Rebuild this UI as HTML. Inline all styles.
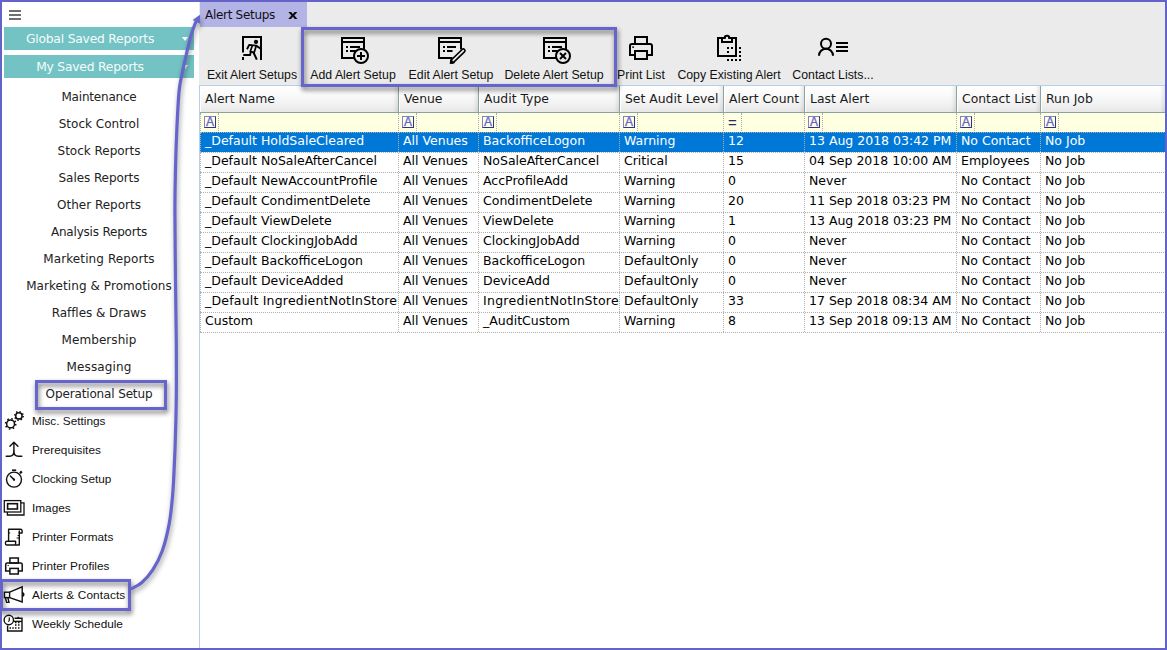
<!DOCTYPE html><html><head><meta charset="utf-8"><title>Alert Setups</title><style>*{box-sizing:border-box;margin:0;padding:0}
html,body{width:1167px;height:650px;overflow:hidden;background:#fff}
body{font-family:"DejaVu Sans","Liberation Sans",sans-serif;color:#1a1a1a}
#app{position:absolute;left:0;top:0;width:1167px;height:650px;background:#fff;overflow:hidden}
#frame{left:0;top:0;width:1167px;height:650px;border:2px solid #6464c8;pointer-events:none}
#app>*{position:absolute}
#side{left:0;top:0;width:200px;height:650px;background:#fff}
#side>*{position:absolute}
.burger{left:9px;top:10px;width:12px;height:10px}
.burger i{display:block;height:2px;background:#6e6e6e;margin-bottom:2px}
.teal{left:4px;width:190px;height:23px;background:#73c3c4;color:#f6fcfc;font-size:12.3px;letter-spacing:-0.2px;line-height:23px;text-align:center;padding:1px 18px 0 0}
.teal b{position:absolute;left:177.6px;top:10px;border:3.7px solid transparent;border-top:4.5px solid #fff;border-bottom:0}
.st{left:0;width:198px;height:20px;line-height:20px;text-align:center;font-size:12px;color:#222}
.sb{left:0;width:198px;height:22px;line-height:22px;font-family:"Liberation Sans",sans-serif;font-size:11.8px;color:#111}
.si{position:absolute;overflow:visible}
.sb span{position:absolute;left:32px;top:0;white-space:nowrap}
#main{left:200px;top:0;width:967px;height:650px;background:#ebebeb;box-shadow:-1px 0 0 #ebebeb}
#main>*{position:absolute}
.tab{left:0;top:2px;width:107px;height:25px;background:#b3b3e5;font-size:12px;letter-spacing:-0.3px;line-height:25px;color:#101018}
.tab span{position:absolute;left:5px;top:1px}
.tab .cx{position:absolute;left:88px;top:0;font-size:12.8px;font-weight:bold;letter-spacing:0;color:#0a0a0a;transform:scaleX(1.18);transform-origin:left center;line-height:25px}
.tb{top:32px;width:140px;height:52px;text-align:center;font-family:"Liberation Sans",sans-serif;font-size:12.3px;color:#111}
.ti{position:absolute;overflow:visible}
.tb span{position:absolute;left:0;width:140px;top:36px;white-space:nowrap}
#grid{left:-1px;top:85px;width:968px;height:565px;background:#fff;border-left:1px solid #b5cfe8;border-top:1px solid #b5cfe8}
#grid>*{position:absolute}
.hdr{left:0;top:0;width:968px;height:27px;background:linear-gradient(#fff,#fbfbfb 30%,#f3f3f3 65%,#e7e7e7);border-bottom:1px solid #8aa3a3}
.hc{position:absolute;top:0;height:26px;line-height:25px;font-size:12.4px;padding-left:5px;border-left:1px solid #8aa3a3;box-shadow:inset 1px 0 0 #fff;white-space:nowrap;overflow:hidden;background:linear-gradient(to right,rgba(0,0,0,0) calc(100% - 5px),rgba(0,0,0,.09))}
.hc:first-child{border-left:0;padding-left:5px}
.flt{left:0;top:27px;width:968px;height:19px;background:#ffffe1}
.fc{position:absolute;top:0;height:20px}
.fc em{position:absolute;left:3px;top:3px;font-style:normal}
.fc em.fa{width:12px;height:12px;border:1px solid #8080d4;border-right-color:#33338a;border-bottom-color:#33338a;color:#6262cc;font-size:12px;line-height:11px;text-align:center;font-family:"Liberation Sans",sans-serif;-webkit-text-stroke:.3px #6262cc}
.fc em.eq{font-size:15px;line-height:12px;left:4px;top:4px;color:#2a2a60;font-family:"Liberation Sans",sans-serif}
.fc u{position:absolute;left:17px;top:0;height:20px;border-left:1px dotted #aaa}
.fc{border-left:1px dotted #aaa}
.row{left:0;width:968px;height:20px;border-top:1px dotted #b0b0b0;font-size:12.5px;line-height:16px;background:#fff;color:#000}
.row.sel{background:#0078d7;color:#fff}
.c{position:absolute;top:0;height:19px;padding-left:4px;border-left:1px dotted #b0b0b0;white-space:nowrap;overflow:hidden}
.c:first-child{padding-left:4px}
.pb{border:3px solid #6565cb;filter:drop-shadow(1.5px 3px 2.5px rgba(0,0,0,.58))}
.arrow{left:0;top:0;filter:drop-shadow(1px 3px 2.5px rgba(0,0,0,.4));overflow:hidden}
.row.last{height:21px;border-bottom:1px dotted #b0b0b0}
</style></head><body>
<div id="app">
<div id="side">
<div class="burger"><i></i><i></i><i></i></div>
<div class="teal" style="top:27px">Global Saved Reports<b></b></div>
<div class="teal" style="top:55px">My Saved Reports<b></b></div>
<div class="st" style="top:87px;letter-spacing:-0.2px">Maintenance</div>
<div class="st" style="top:114px;letter-spacing:0.02px">Stock Control</div>
<div class="st" style="top:141px;letter-spacing:-0.01px">Stock Reports</div>
<div class="st" style="top:168px;letter-spacing:-0.07px">Sales Reports</div>
<div class="st" style="top:195px;letter-spacing:-0.01px">Other Reports</div>
<div class="st" style="top:222px;letter-spacing:-0.2px">Analysis Reports</div>
<div class="st" style="top:249px;letter-spacing:0.1px">Marketing Reports</div>
<div class="st" style="top:276px;letter-spacing:0.07px">Marketing &amp; Promotions</div>
<div class="st" style="top:303px;letter-spacing:-0.06px">Raffles &amp; Draws</div>
<div class="st" style="top:330px;letter-spacing:0.08px">Membership</div>
<div class="st" style="top:357px;letter-spacing:0.14px">Messaging</div>
<div class="st" style="top:384px;letter-spacing:-0.14px">Operational Setup</div>
<svg class="si" style="left:0;top:408px" width="30" height="26" viewBox="0 408 30 26" fill="none" stroke="#111" stroke-width="1.5"><circle cx="10.6" cy="423.9" r="3.9"/><circle cx="10.6" cy="423.9" r="5.1" stroke-width="1.6" stroke-dasharray="1.6 2.4"/><circle cx="18.9" cy="415.9" r="3.2"/><circle cx="18.9" cy="415.9" r="4.3" stroke-width="1.5" stroke-dasharray="1.4 1.98"/></svg>
<div class="sb" style="top:410px"><span>Misc. Settings</span></div>
<svg class="si" style="left:0;top:438px" width="30" height="24" viewBox="0 438 30 24" fill="none" stroke="#111" stroke-width="1.4" stroke-linecap="round" stroke-linejoin="round"><path d="M13.9 442.4V451M9.9 446.3L13.9 442.3L17.9 446.3"/><path d="M6.2 456.2H9.5C12.5 456.2 13.9 454 13.9 451C13.9 454 15.3 456.2 18.3 456.2H21.8"/></svg>
<div class="sb" style="top:439px"><span>Prerequisites</span></div>
<svg class="si" style="left:0;top:466px" width="30" height="26" viewBox="0 466 30 26" fill="none" stroke="#111" stroke-width="1.4"><circle cx="14" cy="479.6" r="7.5"/><path d="M12 470.2H16.2" stroke-width="1.6"/><path d="M20 473.2L21.8 471.4" stroke-width="2.2"/><path d="M14 479.6L10.4 476" stroke-width="1.5" stroke-linecap="round"/><circle cx="14" cy="479.7" r="1.1" fill="#111" stroke="none"/></svg>
<div class="sb" style="top:468px"><span>Clocking Setup</span></div>
<svg class="si" style="left:0;top:496px" width="30" height="24" viewBox="0 496 30 24" fill="none" stroke="#111" stroke-width="1.3"><rect x="4.3" y="500.6" width="16.5" height="11.4"/><rect x="7.6" y="503.7" width="9.8" height="5.3" stroke-width="1.6"/><path d="M20.8 502.8H24V515H7.4V512"/></svg>
<div class="sb" style="top:497px"><span>Images</span></div>
<svg class="si" style="left:0;top:524px" width="30" height="26" viewBox="0 524 30 26" fill="none" stroke="#111" stroke-width="1.4" stroke-linejoin="round"><path d="M8.6 541.2V529.2H20.5a1.6 1.9 0 0 1 1.6 1.9V533H19.3V530.6"/><path d="M19.3 532V545H6.6a1.2 1.9 0 0 1 0-3.8H15.6V545"/><path d="M8.6 533h1.6M17.6 535.5h1.6M16.6 538h2.6" stroke-width="1"/></svg>
<div class="sb" style="top:526px"><span>Printer Formats</span></div>
<svg class="si" style="left:0;top:553px" width="30" height="26" viewBox="0 553 30 26" fill="none" stroke="#111" stroke-width="1.5"><rect x="9.9" y="558" width="8.4" height="5"/><path d="M9.9 571H5.7V564.6a1.6 1.6 0 0 1 1.6-1.6H20.6a1.6 1.6 0 0 1 1.6 1.6V571H18.3"/><rect x="9.9" y="568.4" width="8.4" height="5.6"/><rect x="7.6" y="565" width="1.2" height="1" fill="#111" stroke="none"/></svg>
<div class="sb" style="top:555px"><span>Printer Profiles</span></div>
<svg class="si" style="left:0;top:582px" width="30" height="26" viewBox="0 582 30 26" fill="none" stroke="#111" stroke-width="1.4" stroke-linejoin="miter"><rect x="4.4" y="592.2" width="5.2" height="5.4"/><path d="M9.6 592.2L22.2 586.8V602L9.6 597.6"/><path d="M22.3 592.6a1.6 1.8 0 0 1 0 3.6" fill="#111"/><path d="M5.4 597.8L6.6 602.4H9L7.9 597.8"/></svg>
<div class="sb" style="top:584px"><span style="letter-spacing:.13px">Alerts &amp; Contacts</span></div>
<svg class="si" style="left:0;top:611px" width="30" height="26" viewBox="0 611 30 26" fill="none" stroke="#111" stroke-width="1.4"><path d="M14.5 618.3H22V631H7.6V625.4"/><path d="M14 621.4H22"/><path d="M18.3 616.8V619" stroke-width="1.6"/><circle cx="8.8" cy="620" r="4.7"/><path d="M9.3 617.4V620.6L8.2 621.6" stroke-width="1.2"/><path d="M15 625h1.5M18 625h1.5M9.5 628h1.5M12.3 628h1.5M15 628h1.5M18 628h1.5M15 622.6h1.5M18 622.6h1.5" stroke-width="1.3"/></svg>
<div class="sb" style="top:613px"><span>Weekly Schedule</span></div>
</div>
<div id="main">
<div class="tab"><span>Alert Setups</span><b class="cx">x</b></div>
<svg class="ti" style="left:42px;top:36px" width="22" height="26" viewBox="0 0 22 26" fill="none" stroke="#000" stroke-width="2"><path d="M1 16.6V1H19V24"/><rect x="0" y="21" width="2" height="3" fill="#000" stroke="none"/><circle cx="14" cy="5.9" r="2.1" fill="#000" stroke="none"/><path d="M5 13.2L7.2 8.9L14.2 9.6L18.8 12.8" stroke-width="1.9" stroke-linejoin="round"/><path d="M10.4 9.2L8.3 15.4L12.1 16.6L14.2 10" stroke-width="1.7"/><path d="M9 15.6L8 19H1.3" stroke-width="1.9"/><path d="M11.3 16L14.8 23.6" stroke-width="2"/></svg>
<div class="tb" style="left:-18px"><span>Exit Alert Setups</span></div>
<svg class="ti" style="left:141px;top:37px" width="30" height="28" viewBox="0 0 30 28" fill="none" stroke="#000" stroke-width="2"><rect x="1" y="1" width="22" height="20"/><path d="M1 5H23"/><path d="M5 10h2M9 10h10M5 14h2M9 14h6"/><circle cx="20" cy="19" r="7" fill="#ebebeb"/><path d="M16 19h8M20 15v8"/></svg>
<div class="tb" style="left:83px"><span>Add Alert Setup</span></div>
<svg class="ti" style="left:238px;top:37px" width="30" height="28" viewBox="0 0 30 28" fill="none" stroke="#000" stroke-width="2"><path d="M23 12.5V1H1V21H14.5"/><path d="M1 5H23"/><path d="M5 10h2M9 10h9M5 14h2M9 14h5.5"/><path d="M25.3 13.7L14.6 24" stroke-width="5" stroke-linecap="round"/><path d="M12.2 26.6L12.9 22.3L16.4 25.7Z" fill="#000" stroke-width="1"/><path d="M25.3 13.7L15.2 23.4" stroke="#ebebeb" stroke-width="1.7" stroke-linecap="round"/></svg>
<div class="tb" style="left:181px"><span>Edit Alert Setup</span></div>
<svg class="ti" style="left:343px;top:37px" width="30" height="28" viewBox="0 0 30 28" fill="none" stroke="#000" stroke-width="2"><rect x="1" y="1" width="22" height="20"/><path d="M1 5H23"/><path d="M5 10h2M9 10h10M5 14h2M9 14h6"/><circle cx="20" cy="19" r="7" fill="#ebebeb"/><path d="M17 16l6 6M23 16l-6 6"/></svg>
<div class="tb" style="left:284px"><span>Delete Alert Setup</span></div>
<svg class="ti" style="left:429px;top:35px" width="24" height="26" viewBox="0 0 24 26" fill="none" stroke="#000" stroke-width="2"><rect x="6" y="2" width="12" height="7"/><path d="M6 20H1V11a2 2 0 0 1 2-2H21a2 2 0 0 1 2 2V20H18"/><rect x="6" y="16" width="12" height="8"/><rect x="3.3" y="11.3" width="1.6" height="1.6" fill="#000" stroke="none"/></svg>
<div class="tb" style="left:371px"><span>Print List</span></div>
<svg class="ti" style="left:517px;top:33px" width="26" height="30" viewBox="0 0 26 30" fill="#000" stroke="none"><path d="M8.7 5H1V23H19V5H11.3" fill="none" stroke="#000" stroke-width="2"/><path d="M5 5V9H15V5" fill="none" stroke="#000" stroke-width="2"/><path d="M7.7 5.6V5a2.3 2.3 0 0 1 4.6 0V5.6" fill="none" stroke="#000" stroke-width="2"/><rect x="10" y="14" width="2" height="2"/><rect x="14" y="14" width="2" height="2"/><rect x="10" y="18" width="2" height="2"/><rect x="22" y="14" width="2" height="2"/><rect x="22" y="18" width="2" height="2"/><rect x="22" y="22" width="2" height="2"/><rect x="22" y="26" width="2" height="2"/><rect x="10" y="26" width="2" height="2"/><rect x="14" y="26" width="2" height="2"/><rect x="18" y="26" width="2" height="2"/></svg>
<div class="tb" style="left:459px"><span>Copy Existing Alert</span></div>
<svg class="ti" style="left:617px;top:36px" width="34" height="22" viewBox="0 0 34 22" fill="none" stroke="#000" stroke-width="2"><circle cx="9" cy="7.7" r="5"/><path d="M2 19.7a7 7 0 0 1 14 0"/><path d="M19 7h12M19 11h12M19 15h12"/></svg>
<div class="tb" style="left:563px"><span>Contact Lists...</span></div>
<div id="grid">
<div class="hdr">
<div class="hc" style="left:0px;width:198px">Alert Name</div>
<div class="hc" style="left:198px;width:80px">Venue</div>
<div class="hc" style="left:278px;width:141px">Audit Type</div>
<div class="hc" style="left:419px;width:104px">Set Audit Level</div>
<div class="hc" style="left:523px;width:81px">Alert Count</div>
<div class="hc" style="left:604px;width:152px">Last Alert</div>
<div class="hc" style="left:756px;width:84px">Contact List</div>
<div class="hc" style="left:840px;width:125px">Run Job</div>
</div>
<div class="flt">
<div class="fc" style="left:0px;width:198px"><em class="fa">A</em><u></u></div>
<div class="fc" style="left:198px;width:80px"><em class="fa">A</em><u></u></div>
<div class="fc" style="left:278px;width:141px"><em class="fa">A</em><u></u></div>
<div class="fc" style="left:419px;width:104px"><em class="fa">A</em><u></u></div>
<div class="fc" style="left:523px;width:81px"><em class="eq">=</em><u></u></div>
<div class="fc" style="left:604px;width:152px"><em class="fa">A</em><u></u></div>
<div class="fc" style="left:756px;width:84px"><em class="fa">A</em><u></u></div>
<div class="fc" style="left:840px;width:125px"><em class="fa">A</em><u></u></div>
</div>
<div class="row sel" style="top:46px">
<div class="c" style="left:0px;width:198px">_Default HoldSaleCleared</div>
<div class="c" style="left:198px;width:80px">All Venues</div>
<div class="c" style="left:278px;width:141px">BackofficeLogon</div>
<div class="c" style="left:419px;width:104px">Warning</div>
<div class="c" style="left:523px;width:81px">12</div>
<div class="c" style="left:604px;width:152px">13 Aug 2018 03:42 PM</div>
<div class="c" style="left:756px;width:84px">No Contact</div>
<div class="c" style="left:840px;width:125px">No Job</div>
</div>
<div class="row" style="top:66px">
<div class="c" style="left:0px;width:198px">_Default NoSaleAfterCancel</div>
<div class="c" style="left:198px;width:80px">All Venues</div>
<div class="c" style="left:278px;width:141px">NoSaleAfterCancel</div>
<div class="c" style="left:419px;width:104px">Critical</div>
<div class="c" style="left:523px;width:81px">15</div>
<div class="c" style="left:604px;width:152px">04 Sep 2018 10:00 AM</div>
<div class="c" style="left:756px;width:84px">Employees</div>
<div class="c" style="left:840px;width:125px">No Job</div>
</div>
<div class="row" style="top:86px">
<div class="c" style="left:0px;width:198px">_Default NewAccountProfile</div>
<div class="c" style="left:198px;width:80px">All Venues</div>
<div class="c" style="left:278px;width:141px">AccProfileAdd</div>
<div class="c" style="left:419px;width:104px">Warning</div>
<div class="c" style="left:523px;width:81px">0</div>
<div class="c" style="left:604px;width:152px">Never</div>
<div class="c" style="left:756px;width:84px">No Contact</div>
<div class="c" style="left:840px;width:125px">No Job</div>
</div>
<div class="row" style="top:106px">
<div class="c" style="left:0px;width:198px">_Default CondimentDelete</div>
<div class="c" style="left:198px;width:80px">All Venues</div>
<div class="c" style="left:278px;width:141px">CondimentDelete</div>
<div class="c" style="left:419px;width:104px">Warning</div>
<div class="c" style="left:523px;width:81px">20</div>
<div class="c" style="left:604px;width:152px">11 Sep 2018 03:23 PM</div>
<div class="c" style="left:756px;width:84px">No Contact</div>
<div class="c" style="left:840px;width:125px">No Job</div>
</div>
<div class="row" style="top:126px">
<div class="c" style="left:0px;width:198px">_Default ViewDelete</div>
<div class="c" style="left:198px;width:80px">All Venues</div>
<div class="c" style="left:278px;width:141px">ViewDelete</div>
<div class="c" style="left:419px;width:104px">Warning</div>
<div class="c" style="left:523px;width:81px">1</div>
<div class="c" style="left:604px;width:152px">13 Aug 2018 03:23 PM</div>
<div class="c" style="left:756px;width:84px">No Contact</div>
<div class="c" style="left:840px;width:125px">No Job</div>
</div>
<div class="row" style="top:146px">
<div class="c" style="left:0px;width:198px">_Default ClockingJobAdd</div>
<div class="c" style="left:198px;width:80px">All Venues</div>
<div class="c" style="left:278px;width:141px">ClockingJobAdd</div>
<div class="c" style="left:419px;width:104px">Warning</div>
<div class="c" style="left:523px;width:81px">0</div>
<div class="c" style="left:604px;width:152px">Never</div>
<div class="c" style="left:756px;width:84px">No Contact</div>
<div class="c" style="left:840px;width:125px">No Job</div>
</div>
<div class="row" style="top:166px">
<div class="c" style="left:0px;width:198px">_Default BackofficeLogon</div>
<div class="c" style="left:198px;width:80px">All Venues</div>
<div class="c" style="left:278px;width:141px">BackofficeLogon</div>
<div class="c" style="left:419px;width:104px">DefaultOnly</div>
<div class="c" style="left:523px;width:81px">0</div>
<div class="c" style="left:604px;width:152px">Never</div>
<div class="c" style="left:756px;width:84px">No Contact</div>
<div class="c" style="left:840px;width:125px">No Job</div>
</div>
<div class="row" style="top:186px">
<div class="c" style="left:0px;width:198px">_Default DeviceAdded</div>
<div class="c" style="left:198px;width:80px">All Venues</div>
<div class="c" style="left:278px;width:141px">DeviceAdd</div>
<div class="c" style="left:419px;width:104px">DefaultOnly</div>
<div class="c" style="left:523px;width:81px">0</div>
<div class="c" style="left:604px;width:152px">Never</div>
<div class="c" style="left:756px;width:84px">No Contact</div>
<div class="c" style="left:840px;width:125px">No Job</div>
</div>
<div class="row" style="top:206px">
<div class="c" style="left:0px;width:198px;letter-spacing:.2px">_Default IngredientNotInStore</div>
<div class="c" style="left:198px;width:80px">All Venues</div>
<div class="c" style="left:278px;width:141px;letter-spacing:.27px">IngredientNotInStore</div>
<div class="c" style="left:419px;width:104px">DefaultOnly</div>
<div class="c" style="left:523px;width:81px">33</div>
<div class="c" style="left:604px;width:152px">17 Sep 2018 08:34 AM</div>
<div class="c" style="left:756px;width:84px">No Contact</div>
<div class="c" style="left:840px;width:125px">No Job</div>
</div>
<div class="row last" style="top:226px">
<div class="c" style="left:0px;width:198px">Custom</div>
<div class="c" style="left:198px;width:80px">All Venues</div>
<div class="c" style="left:278px;width:141px">_AuditCustom</div>
<div class="c" style="left:419px;width:104px">Warning</div>
<div class="c" style="left:523px;width:81px">8</div>
<div class="c" style="left:604px;width:152px">13 Sep 2018 09:13 AM</div>
<div class="c" style="left:756px;width:84px">No Contact</div>
<div class="c" style="left:840px;width:125px">No Job</div>
</div>
</div>
</div>
<div class="pb" style="left:301px;top:27px;width:316px;height:60px"></div>
<div class="pb" style="left:35px;top:380px;width:132px;height:30px"></div>
<div class="pb" style="left:0;top:579px;width:131px;height:32px"></div>
<svg class="arrow" width="200" height="650" viewBox="0 0 200 650"><path d="M131.9 588.4C133.5 587.5 138.2 585.7 141.6 582.7C145.0 579.7 149.1 575.5 152.6 570.2C156.1 564.9 159.5 558.6 162.3 550.8C165.1 542.9 167.6 532.3 169.3 523.1C171.0 513.9 171.8 504.6 172.6 495.4C173.4 486.2 173.8 476.9 174.2 467.7C174.6 458.5 175.0 451.6 175.3 440.0C175.7 428.4 176.1 414.2 176.3 398.0C176.5 381.8 176.4 362.7 176.3 343.0C176.2 323.3 175.7 302.0 175.5 280.0C175.3 258.0 174.9 229.5 174.9 211.0C174.9 192.5 175.2 182.8 175.5 169.0C175.8 155.2 176.3 140.8 176.9 128.0C177.5 115.2 178.2 101.0 179.0 92.0C179.8 83.0 180.8 80.2 182.0 74.0C183.2 67.8 184.8 61.2 186.2 55.0C187.6 48.8 189.2 42.1 190.6 37.0C192.0 31.9 193.7 27.4 194.8 24.5C195.9 21.6 196.8 20.3 197.2 19.5" fill="none" stroke="#6565cb" stroke-width="3.2" stroke-linecap="round"/><path d="M200.2 14.6L192.6 19.9L200.2 23.8Z" fill="#6565cb"/></svg>

<div id="frame"></div></div></body></html>
